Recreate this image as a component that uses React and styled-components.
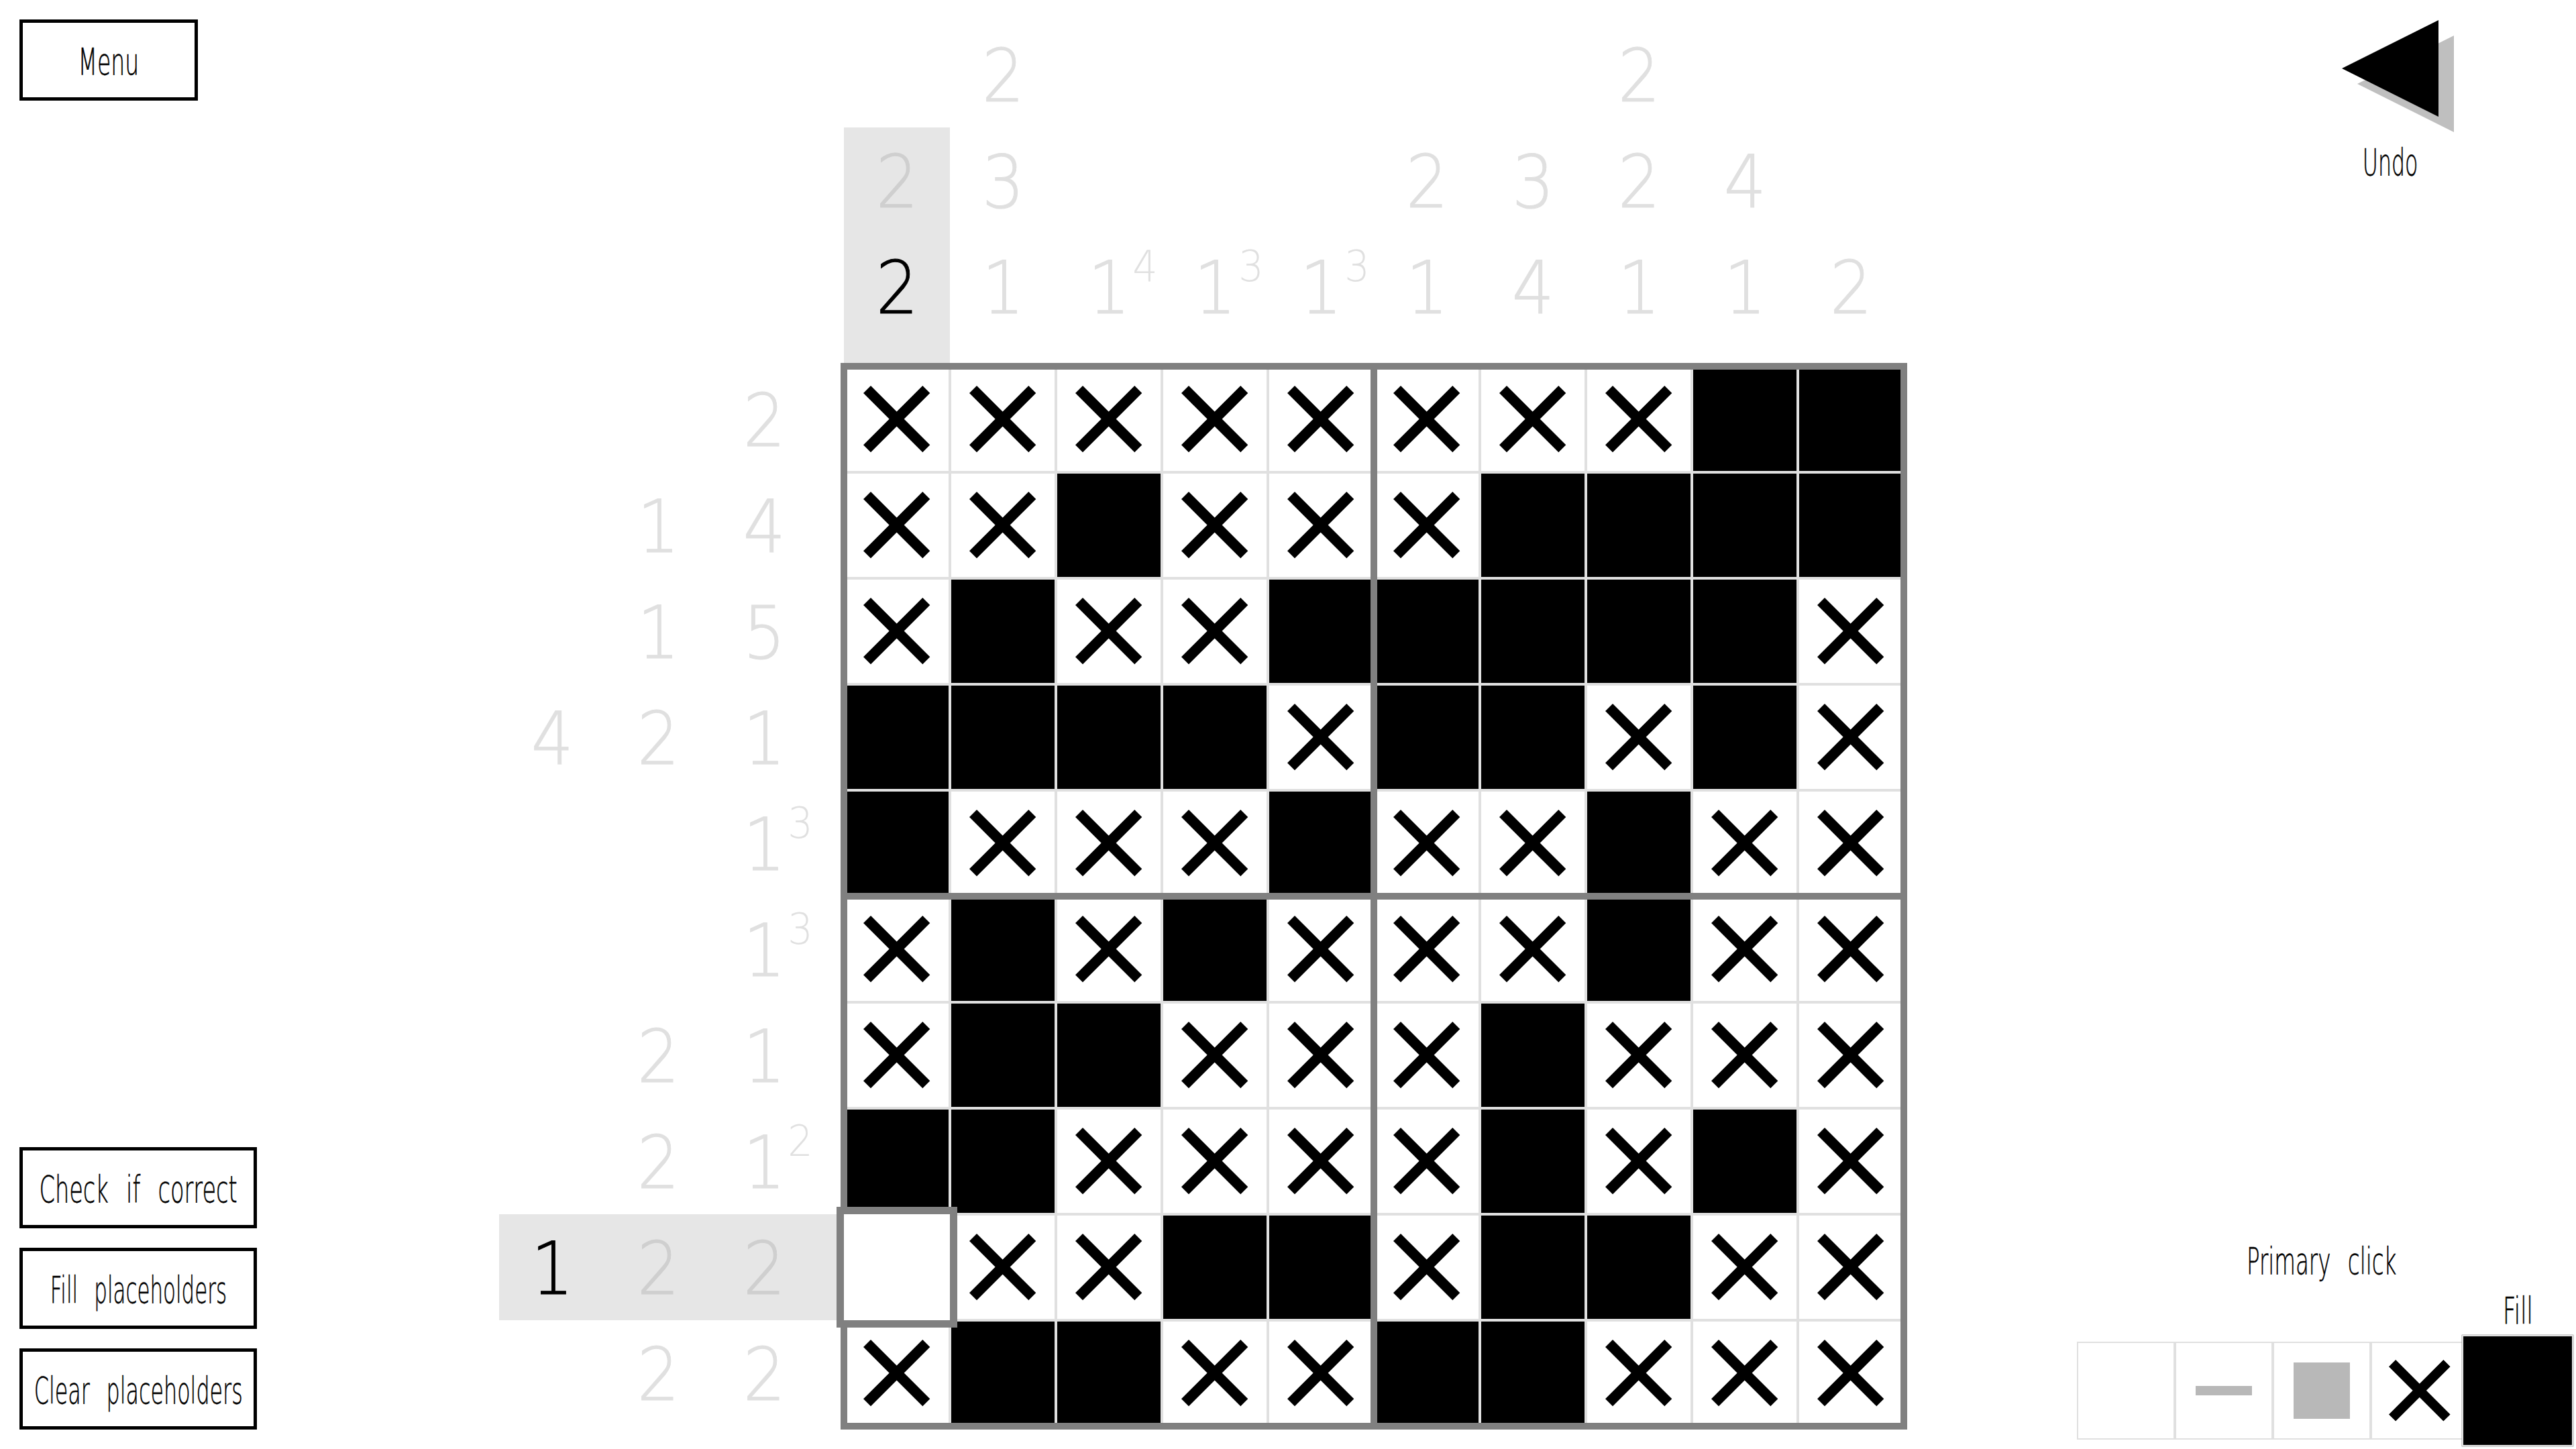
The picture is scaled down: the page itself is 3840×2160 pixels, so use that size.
import React from 'react';
import styled, { createGlobalStyle } from 'styled-components';

const GRAY = '#808080';
const CELL = 158;

const GlobalStyle = createGlobalStyle`
  html, body { margin: 0; padding: 0; background: #fff; }
  body { font-family: "DejaVu Sans", "Liberation Sans", sans-serif; font-weight: 200; color: #000; }
`;

const Page = styled.div`
  width: 3840px;
  height: 2160px;
  overflow: hidden;
  display: grid;
  grid-template-columns: 700px 558px ${CELL * 10}px 1fr;
  grid-template-rows: 546px ${CELL * 10}px 34px;
`;

const LeftRail = styled.div`
  grid-column: 1;
  grid-row: 1 / -1;
  display: flex;
  flex-direction: column;
  justify-content: space-between;
  align-items: flex-start;
  padding: 29px;
`;

const ActionStack = styled.div`
  display: flex;
  flex-direction: column;
  gap: 29px;
`;

const Button = styled.div`
  box-sizing: border-box;
  width: ${(p) => p.$width}px;
  height: 121px;
  padding-top: 4px;
  border: 5px solid #000;
  display: flex;
  align-items: center;
  justify-content: center;
  font-size: 56px;
  white-space: nowrap;
`;

const Squeezed = styled.span`
  display: inline-block;
  transform: scaleX(${(p) => p.$x || 0.6});
  word-spacing: 26px;
  white-space: nowrap;
  -webkit-text-stroke: 0.6px #000;
`;

const ColClues = styled.div`
  grid-column: 3;
  grid-row: 1;
  display: flex;
  align-items: flex-end;
`;

const ColStrip = styled.div`
  width: ${CELL}px;
  padding-bottom: 40px;
  background: ${(p) => (p.$active ? '#e6e6e6' : 'transparent')};
`;

const RowClues = styled.div`
  grid-column: 2;
  grid-row: 2;
  display: grid;
  grid-auto-rows: ${CELL}px;
  justify-items: end;
`;

const RowStrip = styled.div`
  display: flex;
  padding-right: 40px;
  background: ${(p) => (p.$active ? '#e6e6e6' : 'transparent')};
`;

const Clue = styled.div`
  position: relative;
  width: ${CELL}px;
  height: ${CELL}px;
  display: flex;
  align-items: center;
  justify-content: center;
  padding-top: 6px;
  box-sizing: border-box;
  font-size: 108px;
  line-height: 1;
  color: ${(p) => (p.$active ? '#000' : p.$band ? '#cfcfcf' : '#e0e0e0')};
`;

const Digit = styled.span`
  display: inline-block;
  transform: scaleX(0.92);
  -webkit-text-stroke: 1px currentColor;
`;

const Power = styled.span`
  position: absolute;
  left: 133px;
  top: 17px;
  font-size: 64px;
  line-height: 1;
  color: #e0e0e0;
  transform: translateX(-50%) scaleX(0.92);
`;

const Board = styled.div`
  grid-column: 3;
  grid-row: 2;
  position: relative;
  display: grid;
  grid-template-columns: repeat(10, ${CELL}px);
  grid-auto-rows: ${CELL}px;
`;

const Cell = styled.div`
  box-sizing: border-box;
  border: 2px solid ${(p) => (p.$selected ? '#fff' : '#e0e0e0')};
  background: ${(p) => (p.$state === 'B' ? '#000' : '#fff')};
  display: flex;
  align-items: center;
  justify-content: center;
  position: relative;
  z-index: ${(p) => (p.$selected ? 2 : 0)};
  box-shadow: ${(p) => (p.$selected ? `0 0 0 11px ${GRAY}` : 'none')};
`;

const BoardFrame = styled.div`
  position: absolute;
  inset: -5px;
  border: 10px solid ${GRAY};
  z-index: 1;
  pointer-events: none;

  &::before {
    content: '';
    position: absolute;
    top: 0;
    bottom: 0;
    left: calc(50% - 5px);
    width: 10px;
    background: ${GRAY};
  }

  &::after {
    content: '';
    position: absolute;
    left: 0;
    right: 0;
    top: calc(50% - 5px);
    height: 10px;
    background: ${GRAY};
  }
`;

const CrossSvg = styled.svg`
  display: block;
  width: 64.5%;
  height: 64.5%;
`;

const RightRail = styled.div`
  grid-column: 4;
  grid-row: 1 / -1;
  display: flex;
  flex-direction: column;
  justify-content: space-between;
  align-items: flex-end;
  padding: 30px 14px 14px 0;
`;

const Undo = styled.div`
  width: 240px;
  margin-right: 143px;
  display: flex;
  flex-direction: column;
  align-items: center;
  font-size: 56px;
  line-height: 1;
`;

const UndoIcon = styled.svg`
  display: block;
  width: 167px;
  height: 167px;
  margin-left: 23px;
  margin-bottom: 17px;
`;

const ToolPanel = styled.div`
  display: flex;
  flex-direction: column;
  align-items: center;
  font-size: 56px;
  line-height: 1;
`;

const ToolHeading = styled.div`
  margin-bottom: 92px;
`;

const ToolRow = styled.div`
  display: flex;
`;

const ToolSlot = styled.div`
  position: relative;
  width: 146px;
  height: 146px;
`;

const ToolCell = styled.div`
  box-sizing: border-box;
  width: 100%;
  height: 100%;
  border: 2px solid #e0e0e0;
  background: ${(p) => (p.$fill ? '#000' : '#fff')};
  display: flex;
  align-items: center;
  justify-content: center;
  transform: ${(p) => (p.$fill ? 'scale(1.14)' : 'none')};
`;

const ToolCaption = styled.div`
  position: absolute;
  left: 0;
  right: 0;
  bottom: 164px;
  text-align: center;
`;

const Dash = styled.div`
  width: 84px;
  height: 14px;
  background: #b8b8b8;
`;

const Square = styled.div`
  width: 84px;
  height: 84px;
  background: #b8b8b8;
`;

const BOARD = [
  'xxxxxxxxBB',
  'xxBxxxBBBB',
  'xBxxBBBBBx',
  'BBBBxBBxBx',
  'BxxxBxxBxx',
  'xBxBxxxBxx',
  'xBBxxxBxxx',
  'BBxxxxBxBx',
  '_xxBBxBBxx',
  'xBBxxBBxxx',
];

// each clue is [value, power]
const COLS = [
  [[2], [2]],
  [[2], [3], [1]],
  [[1, 4]],
  [[1, 3]],
  [[1, 3]],
  [[2], [1]],
  [[3], [4]],
  [[2], [2], [1]],
  [[4], [1]],
  [[2]],
];

const ROWS = [
  [[2]],
  [[1], [4]],
  [[1], [5]],
  [[4], [2], [1]],
  [[1, 3]],
  [[1, 3]],
  [[2], [1]],
  [[2], [1, 2]],
  [[1], [2], [2]],
  [[2], [2]],
];

const Cross = () => (
  <CrossSvg viewBox="0 0 102 102">
    <path d="M5.67 5.67L96.33 96.33M96.33 5.67L5.67 96.33" stroke="#000" strokeWidth="16" fill="none" />
  </CrossSvg>
);

const ClueItem = ({ clue, active, band }) => (
  <Clue $active={active} $band={band}>
    <Digit>{clue[0]}</Digit>
    {clue[1] && <Power>{clue[1]}</Power>}
  </Clue>
);

const App = () => {
  return (
    <>
      <GlobalStyle />
      <Page>
        <LeftRail>
          <Button $width={266}><Squeezed $x={0.59}>Menu</Squeezed></Button>
          <ActionStack>
            <Button $width={354}><Squeezed>Check if correct</Squeezed></Button>
            <Button $width={354}><Squeezed $x={0.552}>Fill placeholders</Squeezed></Button>
            <Button $width={354}><Squeezed $x={0.567}>Clear placeholders</Squeezed></Button>
          </ActionStack>
        </LeftRail>

        <ColClues>
          {COLS.map((col, c) => (
            <ColStrip key={c} $active={c === 0}>
              {col.map((clue, i) => (
                <ClueItem key={i} clue={clue} band={c === 0} active={c === 0 && i === col.length - 1} />
              ))}
            </ColStrip>
          ))}
        </ColClues>

        <RowClues>
          {ROWS.map((row, r) => (
            <RowStrip key={r} $active={r === 8}>
              {row.map((clue, i) => (
                <ClueItem key={i} clue={clue} band={r === 8} active={r === 8 && i === 0} />
              ))}
            </RowStrip>
          ))}
        </RowClues>

        <Board>
          {BOARD.map((row, r) =>
            row.split('').map((state, c) => (
              <Cell key={`${r}-${c}`} $state={state} $selected={state === '_'}>
                {state === 'x' && <Cross />}
              </Cell>
            ))
          )}
          <BoardFrame />
        </Board>

        <RightRail>
          <Undo>
            <UndoIcon viewBox="0 0 167 167">
              <polygon points="23,95 167,23 167,167" fill="#bfbfbf" />
              <polygon points="0,72 144,0 144,144" fill="#000" />
            </UndoIcon>
            <Squeezed $x={0.565}>Undo</Squeezed>
          </Undo>
          <ToolPanel>
            <ToolHeading><Squeezed $x={0.58}>Primary click</Squeezed></ToolHeading>
            <ToolRow>
              <ToolSlot><ToolCell /></ToolSlot>
              <ToolSlot><ToolCell><Dash /></ToolCell></ToolSlot>
              <ToolSlot><ToolCell><Square /></ToolCell></ToolSlot>
              <ToolSlot><ToolCell><Cross /></ToolCell></ToolSlot>
              <ToolSlot>
                <ToolCell $fill />
                <ToolCaption><Squeezed>Fill</Squeezed></ToolCaption>
              </ToolSlot>
            </ToolRow>
          </ToolPanel>
        </RightRail>
      </Page>
    </>
  );
};

export default App;
